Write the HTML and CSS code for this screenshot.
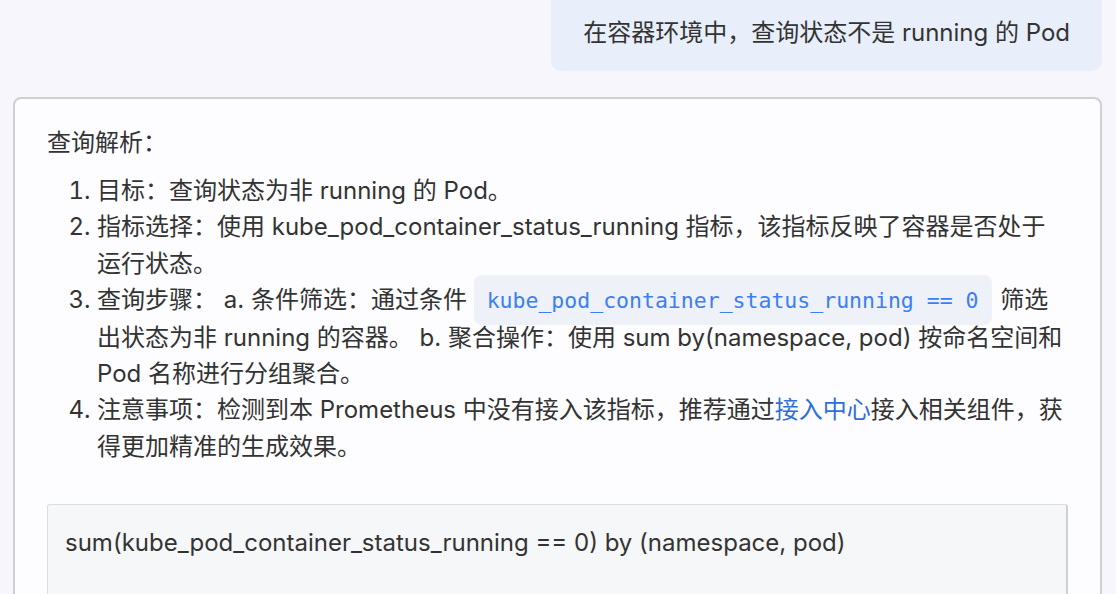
FILE: index.html
```html
<!DOCTYPE html>
<html lang="zh-CN">
<head>
<meta charset="utf-8">
<title>Chat</title>
<link rel="stylesheet" href="styles.css">
</head>
<body>
<div class="chat">
  <div class="user-row">
    <div class="user-bubble">在容器环境中，查询状态不是 running 的 Pod</div>
  </div>
  <div class="answer-card">
    <p class="title">查询解析：</p>
    <ol class="steps">
      <li>目标：查询状态为非 running 的 Pod。</li>
      <li>指标选择：使用 kube_pod_container_status_running 指标，该指标反映了容器是否处于运行状态。</li>
      <li>查询步骤： a. 条件筛选：通过条件 <code class="inline-code">kube_pod_container_status_running == 0</code> 筛选出状态为非 running 的容器。 b. 聚合操作：使用 sum by(namespace, pod) 按命名空间和 Pod 名称进行分组聚合。</li>
      <li>注意事项：检测到本 Prometheus 中没有接入该指标，推荐通过<a class="link" href="#">接入中心</a>接入相关组件，获得更加精准的生成效果。</li>
    </ol>
    <div class="code-block">sum(kube_pod_container_status_running == 0) by (namespace, pod)</div>
  </div>
</div>
</body>
</html>
```

FILE: styles.css
```css
html, body {
  margin: 0;
  padding: 0;
}
body {
  background: #f7f6fd;
  font-family: Inter, "Noto Sans CJK SC", sans-serif;
  color: #333333;
  font-size: 24px;
  overflow: hidden;
  height: 594px;
}
.chat {
  display: flex;
  flex-direction: column;
  gap: 26px;
  padding: 0 14px 0 13px;
}
.user-row {
  display: flex;
  justify-content: flex-end;
}
.user-bubble {
  background: #e8effb;
  border-radius: 0 0 10px 10px;
  padding: 18px 32px 24px 32px;
  line-height: 29px;
  white-space: nowrap;
}
.answer-card {
  background: #fdfdff;
  border: 2px solid #cfcfd4;
  border-radius: 8px;
  padding: 25px 32px 0 32px;
  height: 520px;
}
.title {
  margin: 0;
  line-height: 37px;
}
.steps {
  margin: 12px 0 0 0;
  padding-left: 50px;
  line-height: 36.4px;
}
.inline-code {
  font-family: "DejaVu Sans Mono", monospace;
  font-size: 21.5px;
  color: #3b7ff2;
  background: #eef1f8;
  border-radius: 8px;
  padding: 13px 13px 12px;
  margin: 0 2px 0 0;
}
.link {
  color: #2f6fd8;
  text-decoration: none;
}
.code-block {
  margin-top: 39px;
  background: #f6f7f9;
  border: 1px solid #dcdde0;
  border-right: 2px solid #cfd0d3;
  border-radius: 3px 3px 0 0;
  padding: 22px 17px;
  line-height: 32px;
  height: 120px;
}
```
